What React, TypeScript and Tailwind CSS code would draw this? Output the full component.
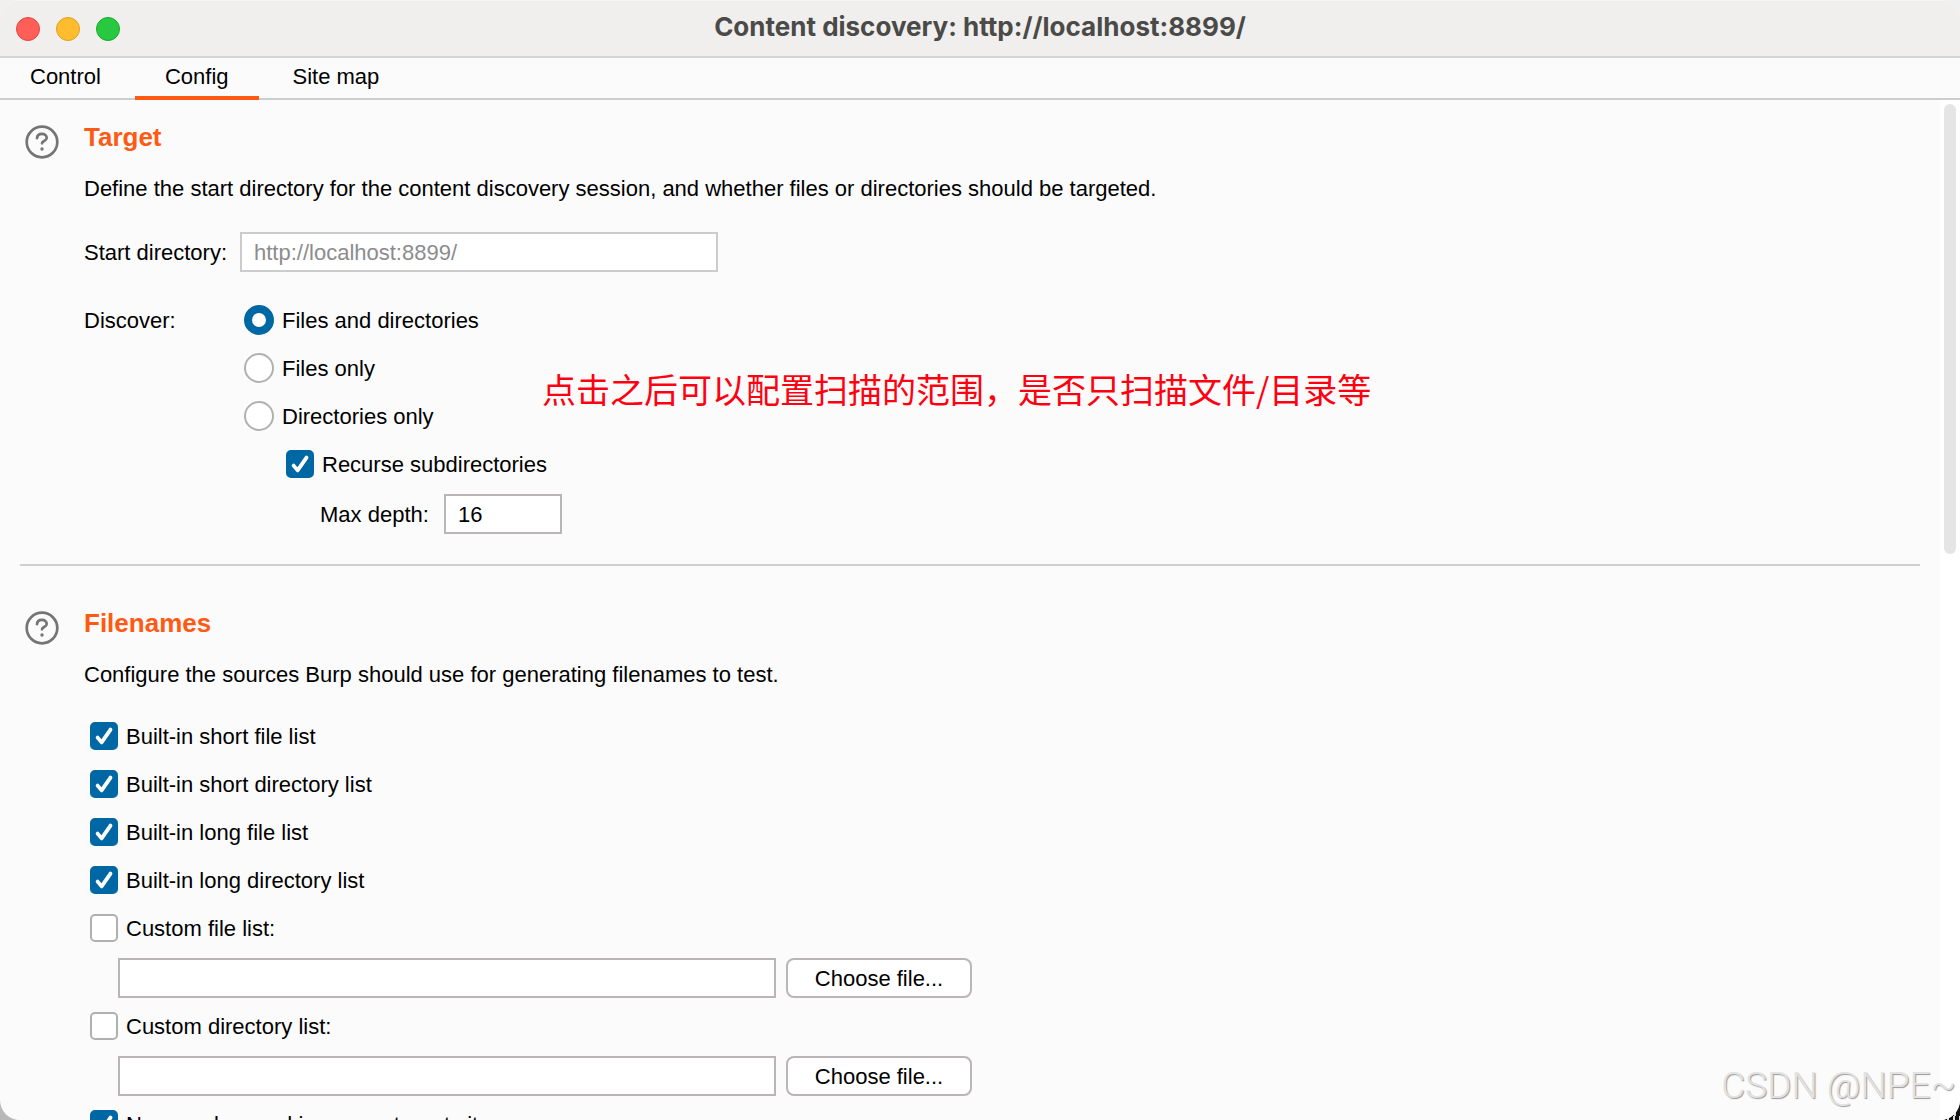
import { useState } from "react";
import type { ReactNode } from "react";
import clsx from "clsx";

// ---------------------------------------------------------------- //

const TABS = ["Control", "Config", "Site map"];

const DISCOVER = ["Files and directories", "Files only", "Directories only"];

const BUILT_IN = [
  "Built-in short file list",
  "Built-in short directory list",
  "Built-in long file list",
  "Built-in long directory list",
];

// ---------------------------------------------------------------- //

const HelpIcon = () => (
  <svg width="34" height="34" viewBox="0 0 34 34" fill="none" stroke="#757575" strokeLinecap="round">
    <circle cx="17" cy="17" r="15.3" strokeWidth="2.7" />
    <path d="M12 13.2c.2-2.7 2.2-4.3 4.9-4.3 2.8 0 4.8 1.6 4.8 4 0 3.2-4.6 3-4.7 5.4" strokeWidth="2.7" />
    <circle cx="17" cy="24" r="1.7" fill="#757575" stroke="none" />
  </svg>
);

const CheckBox = ({ label, defaultChecked = false }: { label: string; defaultChecked?: boolean }) => (
  <label className="flex h-12 w-fit items-center gap-2">
    <span className="grid size-7">
      <input
        type="checkbox"
        defaultChecked={defaultChecked}
        className="peer col-start-1 row-start-1 size-7 appearance-none rounded-[5px] border-2 border-[#b0b0b0] bg-white checked:border-[#0067a5] checked:bg-[#0067a5]"
      />
      <svg
        viewBox="0 0 28 28"
        fill="none"
        stroke="white"
        strokeWidth="3.8"
        strokeLinecap="round"
        strokeLinejoin="round"
        className="pointer-events-none invisible col-start-1 row-start-1 size-7 peer-checked:visible"
      >
        <path d="M7.6 15.6l4 4.8L20.5 7.6" />
      </svg>
    </span>
    {label}
  </label>
);

const Section = ({ title, text, children }: { title: string; text: string; children: ReactNode }) => (
  <section className="flex gap-[25px]">
    <div className="ml-[5px] mt-[9px] shrink-0">
      <HelpIcon />
    </div>
    <div className="flex-1 pt-px">
      <h2 className="text-[26px] leading-10 font-bold text-[#ff5a13]">{title}</h2>
      <p className="mt-3 leading-10">{text}</p>
      {children}
    </div>
  </section>
);

const FilePicker = ({ label }: { label: string }) => (
  <div>
    <CheckBox label={label} />
    <div className="mt-[6px] mb-1 ml-7 flex gap-[10px]">
      <input
        type="text"
        aria-label={label}
        className="h-10 w-[658px] border-2 border-[#bab5b6] bg-white px-3 pt-[2px] outline-none"
      />
      <button type="button" className="h-10 w-[186px] rounded-lg border-2 border-[#bab5b6] bg-white">
        Choose file...
      </button>
    </div>
  </div>
);

// ---------------------------------------------------------------- //

const TitleBar = () => (
  <header className="grid h-[58px] shrink-0 grid-cols-[1fr_auto_1fr] items-center border-t border-b-2 border-t-[#f7f7f6] border-b-[#d6d5d4] bg-[#f0efed] px-4">
    <div className="flex gap-4">
      <button type="button" aria-label="Close" className="size-6 rounded-full border border-[#e2463f] bg-[#ff5f57]" />
      <button type="button" aria-label="Minimize" className="size-6 rounded-full border border-[#e1a116] bg-[#febc2e]" />
      <button type="button" aria-label="Zoom" className="size-6 rounded-full border border-[#12ac28] bg-[#28c840]" />
    </div>
    <h1 className="pb-[3px] font-[Inter,sans-serif] text-[26px] leading-8 font-bold text-[#4a4a48]">
      Content discovery: http://localhost:8899/
    </h1>
  </header>
);

const App = () => {
  const [tab, setTab] = useState("Config");

  return (
    <div className="relative h-screen overflow-hidden bg-[linear-gradient(to_bottom,#f0f0f0,#b8b8b8)]">
      {/* bit of the desktop behind the bottom right corner */}
      <div className="absolute right-0 bottom-0 size-5 bg-[repeating-linear-gradient(100deg,#111_0_4px,#ddd_4px_6px)]" />

      <div className="relative flex h-full flex-col overflow-hidden rounded-[20px] bg-[#fbfbfb] font-['Liberation_Sans',Arial,sans-serif] text-[22px] text-black">
        <TitleBar />

        <nav className="flex h-[42px] shrink-0 gap-1 border-b-2 border-[#c9ced2]">
          {TABS.map((t) => (
            <button
              key={t}
              type="button"
              onClick={() => setTab(t)}
              className={clsx(
                "-mb-[2px] border-b-4 px-[30px] pb-[2px]",
                t === tab ? "border-[#ff5a13]" : "border-transparent",
              )}
            >
              {t}
            </button>
          ))}
        </nav>

        <div className="flex min-h-0 flex-1">
          <main className="min-w-0 flex-1 overflow-hidden px-5 pt-4">
            <Section
              title="Target"
              text="Define the start directory for the content discovery session, and whether files or directories should be targeted."
            >
              <div className="mt-[23px] flex items-center">
                <label htmlFor="start-dir" className="w-[156px]">Start directory:</label>
                <input
                  id="start-dir"
                  type="text"
                  readOnly
                  value="http://localhost:8899/"
                  className="h-10 w-[478px] border-2 border-[#cccccc] bg-white px-3 pt-[2px] text-[#8c8c8c] outline-none"
                />
              </div>

              <fieldset className="mt-6 flex">
                <legend className="float-left w-40 leading-[50px]">Discover:</legend>
                <div>
                  {DISCOVER.map((d, i) => (
                    <label key={d} className="flex h-12 w-fit items-center gap-2">
                      <input
                        type="radio"
                        name="discover"
                        defaultChecked={i === 0}
                        className="size-[30px] appearance-none rounded-full border-2 border-[#b0b0b0] bg-white checked:border-8 checked:border-[#0067a5]"
                      />
                      {d}
                    </label>
                  ))}
                  <div className="ml-[42px]">
                    <CheckBox label="Recurse subdirectories" defaultChecked />
                    <div className="mt-[6px] ml-[34px] flex items-center">
                      <label htmlFor="max-depth" className="w-[124px]">Max depth:</label>
                      <input
                        id="max-depth"
                        type="text"
                        defaultValue="16"
                        className="h-10 w-[118px] border-2 border-[#bab5b6] bg-white px-3 pt-[2px] outline-none"
                      />
                    </div>
                  </div>
                </div>
              </fieldset>
            </Section>

            <hr className="mt-[30px] mb-9 border-t-2 border-[#cfcfcf]" />

            <Section title="Filenames" text="Configure the sources Burp should use for generating filenames to test.">
              <div className="mt-[17px] ml-[6px]">
                {BUILT_IN.map((b) => (
                  <CheckBox key={b} label={b} defaultChecked />
                ))}
                <FilePicker label="Custom file list:" />
                <FilePicker label="Custom directory list:" />
                <CheckBox label="Names observed in use on target site" defaultChecked />
              </div>
            </Section>
          </main>

          <div className="w-5 shrink-0 bg-white px-1 pt-1">
            <div className="h-[450px] rounded-full bg-[#e5e5e5]" />
          </div>
        </div>
      </div>

      {/* note laid over the settings */}
      <p className="pointer-events-none absolute top-[365px] left-[542px] font-['Noto_Sans_CJK_SC',sans-serif] text-[34px] leading-[48px] whitespace-nowrap text-[#ff0010]">
        点击之后可以配置扫描的范围，是否只扫描文件/目录等
      </p>

      {/* watermark */}
      <p className="pointer-events-none absolute right-1 bottom-[10px] font-[Roboto,sans-serif] text-[37px] leading-[48px] font-light text-[#e2e2e2] [text-shadow:1px_1px_1px_#9a9a9a]">
        CSDN @NPE~
      </p>
    </div>
  );
};

export default App;
